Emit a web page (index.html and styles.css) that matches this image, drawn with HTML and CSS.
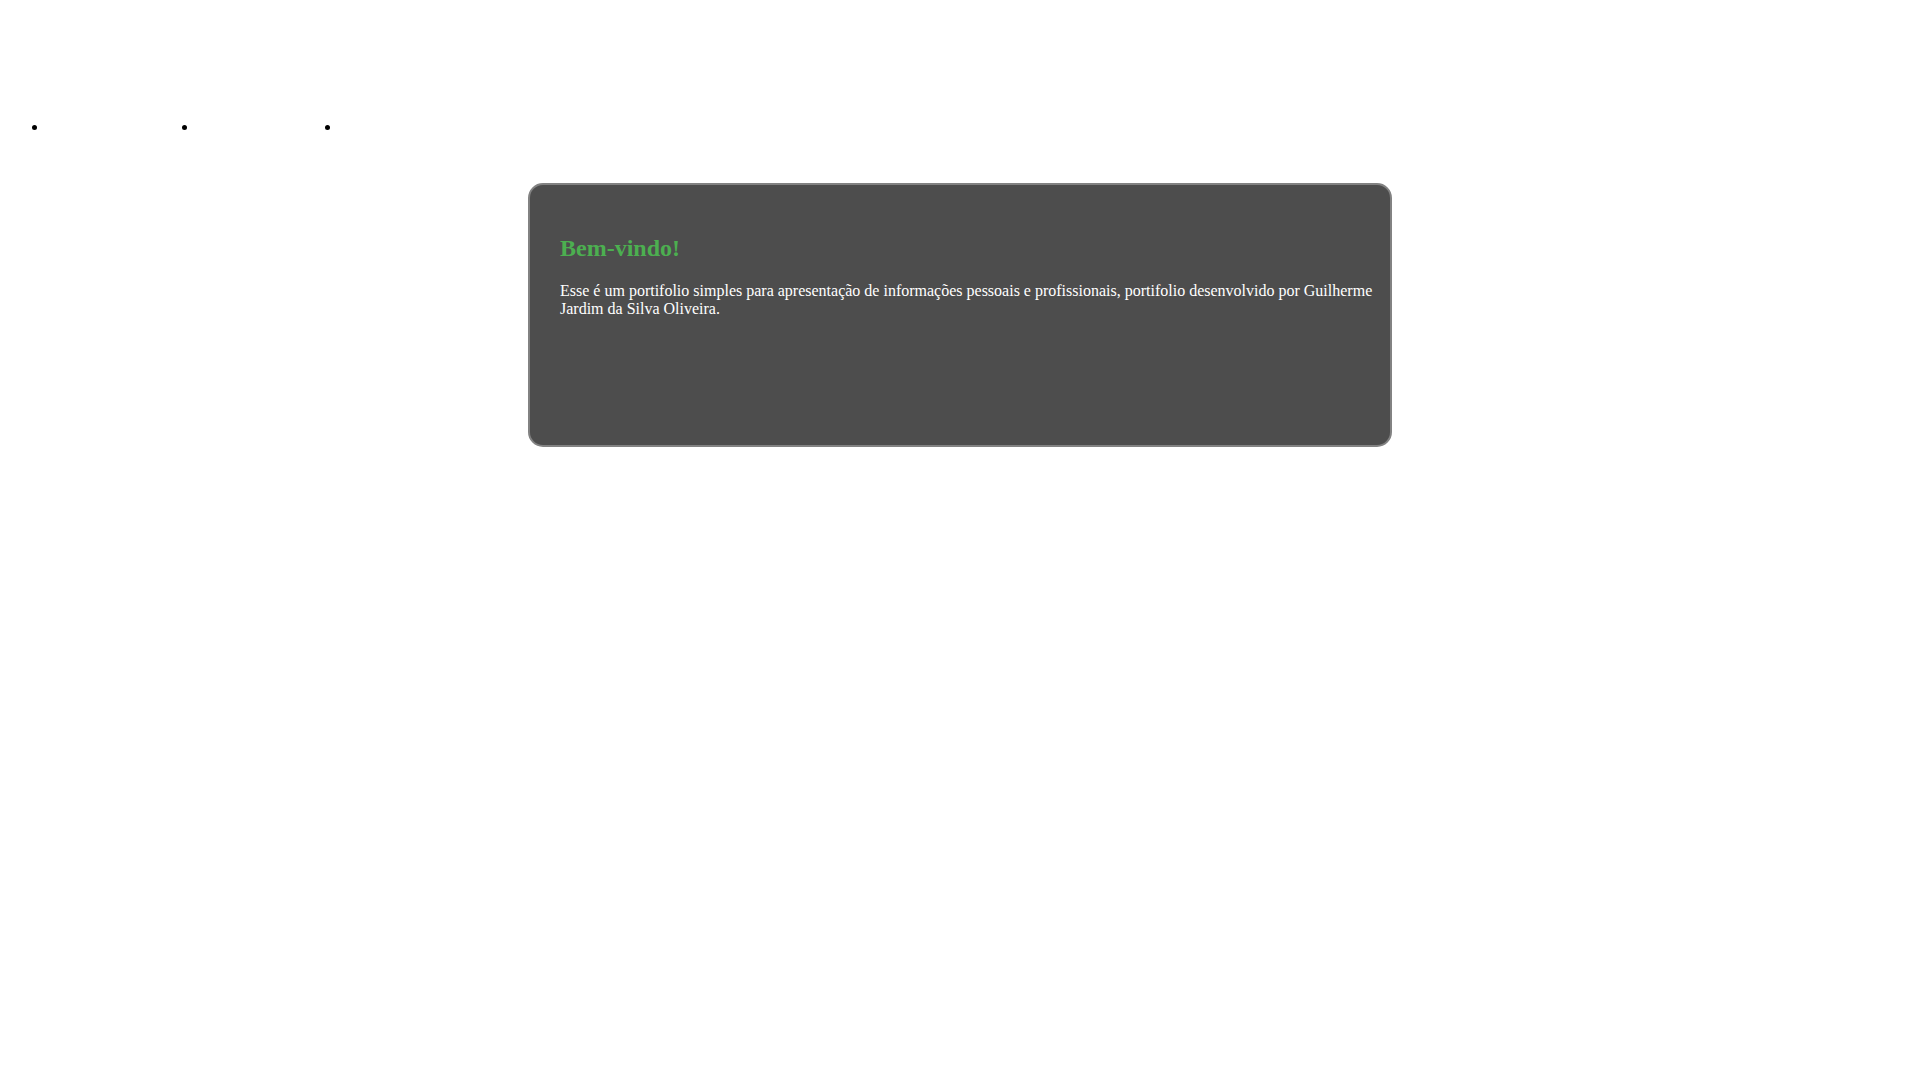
FILE: index.html
```html
<!DOCTYPE html>
<html lang="pt-BR">
<head>
    <meta charset="UTF-8">
    <meta name="viewport" content="width=device-width, initial-scale=1.0">
    <link rel="stylesheet" href="styles.css">
</head>
<body>

    <header>
        <nav>
            <ul class="menu">
                <li class="menu-item wide"></li>
                <li class="menu-item"></li>
                <li class="menu-item"></li>
            </ul>
        </nav>
    </header>

    <main class="container">
        <h2>Bem-vindo!</h2>
        <p>Esse é um portifolio simples para apresentação de informações pessoais e profissionais, portifolio desenvolvido por Guilherme Jardim da Silva Oliveira.</p>
    </main>

</body>
</html>
```

FILE: styles.css
```css
body {
    font-family: "Liberation Serif", "Times New Roman", serif;
    background: #fff;
    margin: 8px;
}
header {
    padding-top: 94px;
    padding-bottom: 31px;
}
.menu {
    display: flex;
    margin: 16px 0;
    padding-left: 40px;
}
.menu-item {
    width: 143px;
}
.menu-item.wide {
    width: 150px;
}
.container {
    box-sizing: border-box;
    width: 864px;
    max-width: 100%;
    min-height: 264px;
    margin: 0 auto;
    padding: 30px 10px 30px 30px;
    background: #4d4d4d;
    border: 2px solid #828282;
    border-radius: 15px;
    color: white;
}
.container h2 {
    color: #4caf50;
    font-size: 24px;
    margin: 20px 0;
}
.container p {
    font-size: 16px;
    margin: 16px 0;
}
```
